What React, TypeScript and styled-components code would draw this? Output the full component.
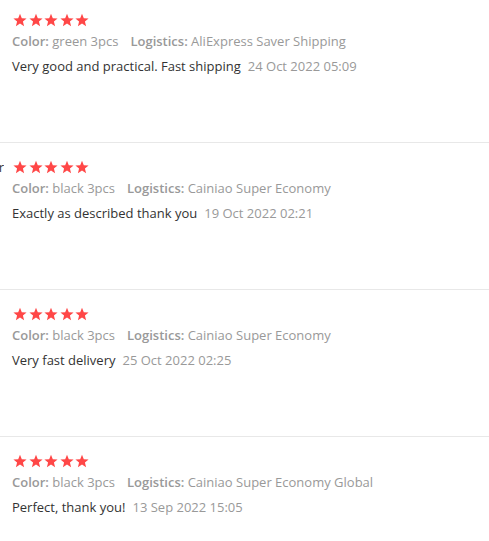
import React from "react";
import styled, { createGlobalStyle } from "styled-components";

const Global = createGlobalStyle`
  html, body { margin: 0; padding: 0; background: #fff; overflow: hidden; }
  body { font-family: "Open Sans", "Liberation Sans", Arial, sans-serif; }
`;

const List = styled.div`
  margin-top: -4px;
  width: 489px;
`;

const Row = styled.div`
  display: flex;
  align-items: flex-start;
  padding: 17px 0 67px 0;
  border-bottom: 1px solid #e8e8e8;
`;

const NameCell = styled.div`
  width: 4px;
  flex: none;
  overflow: hidden;
  display: flex;
  justify-content: flex-end;
  white-space: nowrap;
  font-size: 13px;
  line-height: 14px;
  color: #333;
`;

const Content = styled.div`
  margin-left: 8px;
  display: flex;
  flex-direction: column;
`;

const Stars = styled.div`
  display: flex;
  gap: 1.5px;
  height: 14px;
  padding-left: 1px;
`;

const Meta = styled.div`
  margin-top: 5px;
  font-size: 13px;
  line-height: 18px;
  color: #999;
  white-space: nowrap;
`;

const MetaItem = styled.span<{ $first?: boolean }>`
  margin-left: ${(p) => (p.$first ? "0" : "12px")};
  b { font-weight: 600; }
`;

const Body = styled.div`
  margin-top: 7px;
  font-size: 13px;
  line-height: 18px;
  color: #333;
  white-space: nowrap;
`;

const DateText = styled.span`
  color: #999;
  margin-left: 7px;
`;

const Star = () => (
  <svg width="14" height="14" viewBox="0 0 24 24">
    <path
      fill="#ff4747"
      d="M12 1.2l3.1 7.6 8.2.5-6.3 5.2 2 8-7-4.4-7 4.4 2-8L.7 9.3l8.2-.5z"
    />
  </svg>
);

type Review = {
  name?: string;
  color: string;
  logistics: string;
  text: string;
  date: string;
};

const reviews: Review[] = [
  {
    color: "green 3pcs",
    logistics: "AliExpress Saver Shipping",
    text: "Very good and practical. Fast shipping",
    date: "24 Oct 2022 05:09",
  },
  {
    name: "r",
    color: "black 3pcs",
    logistics: "Cainiao Super Economy",
    text: "Exactly as described thank you",
    date: "19 Oct 2022 02:21",
  },
  {
    color: "black 3pcs",
    logistics: "Cainiao Super Economy",
    text: "Very fast delivery",
    date: "25 Oct 2022 02:25",
  },
  {
    color: "black 3pcs",
    logistics: "Cainiao Super Economy Global",
    text: "Perfect, thank you!",
    date: "13 Sep 2022 15:05",
  },
];

export default function App() {
  return (
    <>
      <Global />
      <List>
        {reviews.map((r, i) => (
          <Row key={i}>
            <NameCell>{r.name ?? ""}</NameCell>
            <Content>
              <Stars>
                {[0, 1, 2, 3, 4].map((s) => (
                  <Star key={s} />
                ))}
              </Stars>
              <Meta>
                <MetaItem $first>
                  <b>Color:</b> {r.color}
                </MetaItem>
                <MetaItem>
                  <b>Logistics:</b> {r.logistics}
                </MetaItem>
              </Meta>
              <Body>
                {r.text}
                <DateText>{r.date}</DateText>
              </Body>
            </Content>
          </Row>
        ))}
      </List>
    </>
  );
}
